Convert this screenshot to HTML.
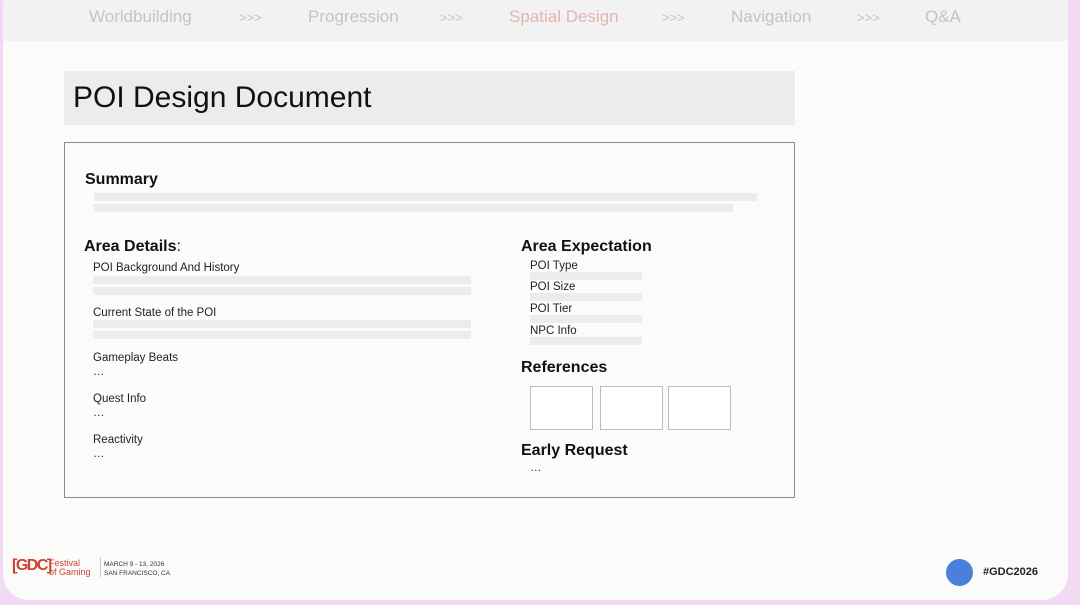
<!DOCTYPE html>
<html><head><meta charset="utf-8"><style>
*{margin:0;padding:0;box-sizing:border-box}
body{width:1080px;height:605px;background:#f2daf4;position:relative;overflow:hidden;font-family:"Liberation Sans",sans-serif}
.slide{position:absolute;left:3px;top:-20px;width:1065px;height:620px;background:#fbfcfa;border-radius:26px;overflow:hidden}
.nav{position:absolute;left:0;top:0;width:100%;height:61px;background:#f2f2f2}
.nav span{position:absolute;top:27px;font-size:17px;color:#c4c4c4}
.a{position:absolute}
.title{left:61px;top:91px;width:731px;height:54px;background:#ececec;font-size:30px;color:#111;padding:10px 0 0 9px}
.box{left:61px;top:162px;width:731px;height:356px;border:1.5px solid #8a8aa0}
.h{font-weight:bold;font-size:16px;color:#111}
.t{font-size:11.5px;color:#222}
.bar{background:#ececec;height:8px}
.ref{border:1px solid #bbb;width:63px;height:44px;background:#fff}
</style></head><body>
<div class="slide">
<div class="nav">
<span style="left:86px">Worldbuilding</span>
<span style="left:236px;font-size:13px;top:30px">&gt;&gt;&gt;</span>
<span style="left:305px">Progression</span>
<span style="left:437px;font-size:13px;top:30px">&gt;&gt;&gt;</span>
<span style="left:506px;color:#e4b4b4">Spatial Design</span>
<span style="left:659px;font-size:13px;top:30px">&gt;&gt;&gt;</span>
<span style="left:728px">Navigation</span>
<span style="left:854px;font-size:13px;top:30px">&gt;&gt;&gt;</span>
<span style="left:922px">Q&amp;A</span>
</div>
<div class="a title">POI Design Document</div>
<div class="a box"></div>
<div class="a h" style="left:82px;top:191px">Summary</div>
<div class="a bar" style="left:91px;top:213px;width:663px"></div>
<div class="a bar" style="left:91px;top:224px;width:639px"></div>
<div class="a h" style="left:81px;top:258px">Area Details<span style="font-weight:normal">:</span></div>
<div class="a t" style="left:90px;top:282px">POI Background And History</div>
<div class="a bar" style="left:90px;top:296px;width:378px"></div>
<div class="a bar" style="left:90px;top:307px;width:378px"></div>
<div class="a t" style="left:90px;top:327px">Current State of the POI</div>
<div class="a bar" style="left:90px;top:340px;width:378px"></div>
<div class="a bar" style="left:90px;top:351px;width:378px"></div>
<div class="a t" style="left:90px;top:372px">Gameplay Beats</div>
<div class="a t" style="left:90px;top:386px">…</div>
<div class="a t" style="left:90px;top:413px">Quest Info</div>
<div class="a t" style="left:90px;top:427px">…</div>
<div class="a t" style="left:90px;top:454px">Reactivity</div>
<div class="a t" style="left:90px;top:468px">…</div>
<div class="a h" style="left:518px;top:258px">Area Expectation</div>
<div class="a t" style="left:527px;top:280px">POI Type</div>
<div class="a bar" style="left:527px;top:292px;width:112px"></div>
<div class="a t" style="left:527px;top:301px">POI Size</div>
<div class="a bar" style="left:527px;top:313px;width:112px"></div>
<div class="a t" style="left:527px;top:323px">POI Tier</div>
<div class="a bar" style="left:527px;top:335px;width:112px"></div>
<div class="a t" style="left:527px;top:345px">NPC Info</div>
<div class="a bar" style="left:527px;top:357px;width:112px"></div>
<div class="a h" style="left:518px;top:379px">References</div>
<div class="a ref" style="left:527px;top:406px"></div>
<div class="a ref" style="left:597px;top:406px"></div>
<div class="a ref" style="left:665px;top:406px"></div>
<div class="a h" style="left:518px;top:462px">Early Request</div>
<div class="a t" style="left:527px;top:482px">…</div>
<div class="a" style="left:9px;top:577px;font-size:16px;font-weight:bold;color:#c9432f;letter-spacing:-1.5px">[GDC]</div>
<div class="a" style="left:46px;top:579px;font-size:9px;line-height:9px;color:#c9432f">Festival<br>of Gaming</div>
<div class="a" style="left:97px;top:577px;width:1px;height:20px;background:#ccc"></div>
<div class="a" style="left:101px;top:580px;font-size:6.5px;line-height:9px;color:#333">MARCH 9 - 13, 2026<br>SAN FRANCISCO, CA</div>
<div class="a" style="left:943px;top:579px;width:27px;height:27px;border-radius:50%;background:#4a7fdc"></div>
<div class="a" style="left:980px;top:586px;font-size:11px;font-weight:bold;color:#222">#GDC2026</div>
</div>
</body></html>
